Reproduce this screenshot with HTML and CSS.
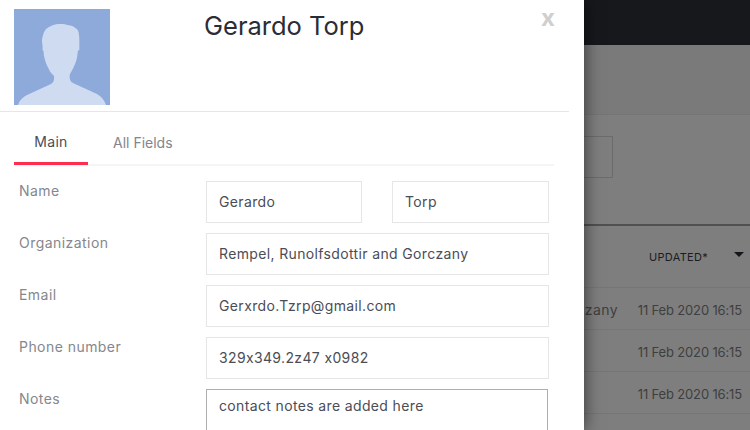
FILE: index.html
```html
<!DOCTYPE html>
<html lang="en">
<head>
<meta charset="utf-8">
<title>Gerardo Torp</title>
<link rel="stylesheet" href="styles.css">
</head>
<body>
<div class="page">
  <div class="topbar"></div>
  <div class="subhead"></div>
  <div class="toolbar"><div class="searchbox"></div></div>
  <div class="table">
    <div class="thead"><span class="th">UPDATED*</span><span class="caret"></span></div>
    <div class="tr"><span class="org">Rempel, Runolfsdottir and Gorczany</span><span class="date">11 Feb 2020 16:15</span></div>
    <div class="tr"><span class="date">11 Feb 2020 16:15</span></div>
    <div class="tr"><span class="date">11 Feb 2020 16:15</span></div>
  </div>
</div>
<aside class="panel">
  <div class="panel-inner">
    <header class="head">
      <svg class="avatar" viewBox="0 0 96 96" aria-hidden="true">
        <rect width="96" height="96" fill="#8eaadb"/>
        <path fill="#cfdbf0" d="M4 96C5.500 91 9 88 13 86L37 75C39.500 73.500 40.500 71 40 67C38.500 65.500 37 64 36 62.500C34 58.500 32 55 31 51C30 48 29.500 45 29.500 42L28.500 41C28.700 38 28.500 35.500 28 33C28 30 28.300 28 29 26.500C29.500 23.500 31 21 32.700 19.500C35 17.500 38 16.500 41 15.500C43 15 45 15 47 15C50 15 52 15.500 54 16C56.500 16.500 58.500 17 60 18C62.500 19.500 64 21 64.500 23C65.500 27 65.500 34 65.300 41L63.800 42C63.500 46 63 49.500 62 52.500C60.500 57 58 61.500 56 65C55.500 67 55.500 69 56 70.500C56.500 72.500 58 73.500 60 74.500L83 85C87 87.500 90.500 91 92 96Z"/>
      </svg>
      <h1 class="title">Gerardo Torp</h1>
      <span class="close">x</span>
    </header>
    <nav class="tabs">
      <a class="tab active">Main</a>
      <a class="tab">All Fields</a>
    </nav>
    <form class="form">
      <label class="lbl">Name</label>
      <div class="pair">
        <input class="fld" value="Gerardo">
        <input class="fld" value="Torp">
      </div>
      <label class="lbl">Organization</label>
      <input class="fld" value="Rempel, Runolfsdottir and Gorczany">
      <label class="lbl">Email</label>
      <input class="fld" value="Gerxrdo.Tzrp@gmail.com">
      <label class="lbl">Phone number</label>
      <input class="fld" value="329x349.2z47 x0982">
      <label class="lbl">Notes</label>
      <textarea class="notes">contact notes are added here</textarea>
    </form>
  </div>
</aside>
</body>
</html>
```
FILE: styles.css
```css
* { box-sizing: border-box; }
html, body { margin: 0; height: 430px; overflow: hidden; }
body { font-family: "Inter", "Open Sans", sans-serif; font-feature-settings: "calt" 0; background: #7e7e7e; position: relative; }

.page { height: 430px; overflow: hidden; background: #7e7e7e; }
.topbar { height: 45px; background: #17181c; }
.subhead { height: 70px; background: #7a7a7a; border-bottom: 1px solid #757575; }
.toolbar { height: 111px; padding-top: 21px; padding-left: 584px; border-bottom: 2px solid #505050; }
.searchbox { width: 29px; height: 42px; border: 1px solid #6c6c6c; border-left: 0; }

.table { padding-left: 584px; }
.thead { height: 62px; display: flex; align-items: center; padding-left: 65px; border-bottom: 1px solid #767676; font-size: 11px; letter-spacing: 0.3px; color: #1b1b22; }
.caret { margin-left: 26px; margin-top: -5px; border: 5px solid transparent; border-top: 5px solid #15151a; border-bottom: 0; }
.tr { position: relative; height: 42px; display: flex; align-items: center; justify-content: flex-end; padding: 2px 8px 0 0; border-bottom: 1px solid #767676; font-size: 13px; letter-spacing: -0.15px; color: #3f3f3f; overflow: hidden; }
.org { position: absolute; right: 132px; white-space: nowrap; font-size: 14px; letter-spacing: 0.4px; }
.date { white-space: nowrap; }

.panel { position: absolute; left: 0; top: 0; width: 584px; height: 430px; background: #fff; box-shadow: 0 0 16px rgba(0,0,0,.6); overflow: hidden; }
.panel-inner { width: 569px; }
.head { position: relative; height: 112px; padding: 9px 14px 0; display: flex; align-items: flex-start; border-bottom: 1px solid #e6e6e6; }
.avatar { width: 96px; height: 96px; display: block; flex: none; }
.title { margin: 0 0 0 94px; font-size: 25.5px; line-height: 34px; font-weight: 400; color: #2a2d36; }
.close { position: absolute; left: 541px; top: 3px; font-size: 24px; line-height: 30px; font-weight: 700; color: #cfcfcf; }

.tabs { margin: 0 15px 0 14px; height: 54px; display: flex; border-bottom: 2px solid #f5f5f5; }
.tab { height: 53px; display: flex; align-items: center; justify-content: center; font-size: 14px; color: #83858c; padding-top: 7px; }
.tab:first-child { width: 74px; letter-spacing: 0.3px; }
.tab + .tab { margin-left: 25px; }
.tab.active { color: #4b4e57; border-bottom: 3px solid #ff2d4f; padding-top: 8px; }

.form { margin-top: 15px; padding: 0 20px 0 19px; display: grid; grid-template-columns: 187px 343px; row-gap: 10px; }
.lbl { font-size: 14px; line-height: 20px; letter-spacing: 0.45px; color: #85878d; }
.pair { display: flex; justify-content: space-between; }
.pair .fld { width: 156px; }
.pair .fld + .fld { width: 157px; }
.fld { display: block; width: 343px; height: 42px; margin: 0; padding: 0 12px 2px; border: 1px solid #e6e6e6; border-radius: 0; outline: 0; background: #fff; font: 14px "Inter", "Open Sans", sans-serif; font-feature-settings: "calt" 0; letter-spacing: 0.36px; color: #4a4d56; }
.notes { display: block; width: 342px; height: 80px; margin: 0; padding: 5px 12px; border: 1px solid #aeaeae; border-radius: 0; outline: 0; resize: none; background: #fff; font: 14px/22px "Inter", "Open Sans", sans-serif; font-feature-settings: "calt" 0; letter-spacing: 0.36px; color: #4a4d56; }
```
